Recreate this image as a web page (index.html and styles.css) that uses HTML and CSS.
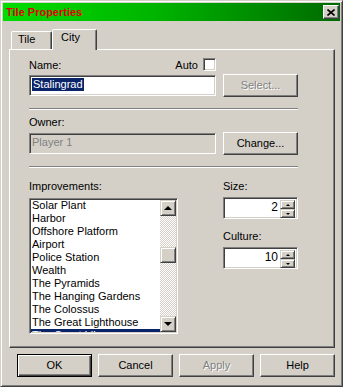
FILE: index.html
```html
<!DOCTYPE html>
<html>
<head>
<meta charset="utf-8">
<link rel="stylesheet" href="styles.css">
</head>
<body>
<div class="window">
  <div class="titlebar">
    <span class="title">Tile Properties</span>
    <div class="close">
      <svg width="8" height="7" viewBox="0 0 8 7"><path d="M0.5 0.5 L7.5 6.5 M7.5 0.5 L0.5 6.5" stroke="#000" stroke-width="1.6" fill="none"/></svg>
    </div>
  </div>
  <div class="tabs">
    <div class="tab">Tile</div>
    <div class="tab active">City</div>
  </div>
  <div class="sheet">
    <div class="head-row">
      <span class="label">Name:</span>
      <span class="auto"><span class="label">Auto</span><span class="check"></span></span>
    </div>
    <div class="field-row">
      <div class="edit"><span class="sel">Stalingrad</span></div>
      <div class="btn disabled">Select...</div>
    </div>
    <div class="sep"></div>
    <div class="label owner-label">Owner:</div>
    <div class="field-row owner-row">
      <div class="edit readonly">Player 1</div>
      <div class="btn">Change...</div>
    </div>
    <div class="sep"></div>
    <div class="lower">
      <div class="impr">
        <div class="label">Improvements:</div>
        <div class="listbox">
          <ul class="items">
            <li>Solar Plant</li>
            <li>Harbor</li>
            <li>Offshore Platform</li>
            <li>Airport</li>
            <li>Police Station</li>
            <li>Wealth</li>
            <li>The Pyramids</li>
            <li>The Hanging Gardens</li>
            <li>The Colossus</li>
            <li>The Great Lighthouse</li>
            <li class="selected">The Great Library</li>
          </ul>
          <div class="scrollbar">
            <div class="sb-btn"><span class="tri-up"></span></div>
            <div class="track"><div class="thumb"></div></div>
            <div class="sb-btn"><span class="tri-down"></span></div>
          </div>
        </div>
      </div>
      <div class="spins">
        <div class="label">Size:</div>
        <div class="spin">
          <span class="val">2</span>
          <div class="spin-btns">
            <div class="sp"><span class="mini-up"></span></div>
            <div class="sp"><span class="mini-down"></span></div>
          </div>
        </div>
        <div class="label culture-label">Culture:</div>
        <div class="spin">
          <span class="val">10</span>
          <div class="spin-btns">
            <div class="sp"><span class="mini-up"></span></div>
            <div class="sp"><span class="mini-down"></span></div>
          </div>
        </div>
      </div>
    </div>
  </div>
  <div class="buttons">
    <div class="btn default">OK</div>
    <div class="btn">Cancel</div>
    <div class="btn disabled">Apply</div>
    <div class="btn">Help</div>
  </div>
</div>
</body>
</html>
```
FILE: styles.css
```css
html, body {
  margin: 0;
  padding: 0;
  background: #d4d0c8;
}
body {
  font-family: "Liberation Sans", Arial, sans-serif;
  font-size: 11px;
  color: #000;
}
.window {
  width: 343px;
  height: 387px;
  box-sizing: border-box;
  border: 1px solid;
  border-color: #d4d0c8 #404040 #404040 #d4d0c8;
  box-shadow: inset 1px 1px #fff, inset -1px -1px #808080;
  padding: 2px;
  background: #d4d0c8;
  display: flex;
  flex-direction: column;
}
.titlebar {
  height: 18px;
  flex: none;
  display: flex;
  align-items: center;
  justify-content: space-between;
  background: linear-gradient(to right, #00dc00, #00b400 45%, #006a00);
  padding-left: 3px;
}
.title {
  color: #e00000;
  font-weight: bold;
  font-size: 11px;
  line-height: 13px;
}
.close {
  width: 16px;
  height: 14px;
  box-sizing: border-box;
  margin-right: 1px;
  background: #d4d0c8;
  border: 1px solid;
  border-color: #fff #404040 #404040 #fff;
  box-shadow: inset -1px -1px #808080;
  display: flex;
  align-items: center;
  justify-content: center;
}
.close svg { display: block; }
.tabs {
  display: flex;
  align-items: flex-end;
  height: 20px;
  margin-top: 8px;
  margin-left: 6px;
  flex: none;
  position: relative;
  z-index: 1;
}
.tab {
  box-sizing: border-box;
  height: 18px;
  width: 41px;
  margin-left: 2px;
  border: 1px solid;
  border-bottom: none;
  border-color: #fff #404040 transparent #fff;
  box-shadow: inset -1px 0 #808080;
  border-radius: 2px 2px 0 0;
  padding: 1px 0 0 6px;
  line-height: 13px;
}
.tab.active {
  height: 21px;
  width: 45px;
  margin-left: 0;
  margin-bottom: -1px;
  background: #d4d0c8;
  padding: 1px 0 0 8px;
}
.sheet {
  box-sizing: border-box;
  width: 326px;
  height: 299px;
  margin-left: 6px;
  border: 1px solid;
  border-color: #fff #404040 #404040 #fff;
  box-shadow: inset -1px -1px #808080;
  padding: 8px 0 0 19px;
  flex: none;
}
.label {
  line-height: 13px;
  display: block;
}
.head-row {
  width: 187px;
  height: 16px;
  display: flex;
  justify-content: space-between;
  align-items: flex-start;
}
.head-row > .label { margin-top: 1px; }
.auto {
  display: flex;
  align-items: flex-start;
}
.auto .label { margin-top: 1px; }
.check {
  width: 13px;
  height: 13px;
  box-sizing: border-box;
  margin-left: 5px;
  background: #fff;
  border: 1px solid;
  border-color: #808080 #fff #fff #808080;
  box-shadow: inset 1px 1px #404040, inset -1px -1px #d4d0c8;
}
.field-row {
  display: flex;
  align-items: center;
  gap: 7px;
  height: 23px;
}
.owner-row { margin-top: 3px; }
.edit {
  width: 187px;
  height: 21px;
  box-sizing: border-box;
  background: #fff;
  border: 1px solid;
  border-color: #808080 #fff #fff #808080;
  box-shadow: inset 1px 1px #404040, inset -1px -1px #d4d0c8;
  padding: 2px 2px;
  line-height: 13px;
}
.edit.readonly {
  background: #d4d0c8;
  color: #808080;
  padding-left: 2px;
}
.sel {
  display: inline-block;
  background: #0a246a;
  color: #fff;
  padding: 0 1px;
  line-height: 13px;
}
.btn {
  width: 75px;
  height: 23px;
  box-sizing: border-box;
  border: 1px solid;
  border-color: #fff #404040 #404040 #fff;
  box-shadow: inset -1px -1px #808080;
  background: #d4d0c8;
  display: flex;
  align-items: center;
  justify-content: center;
  line-height: 13px;
  flex: none;
}
.btn.disabled {
  color: #808080;
  text-shadow: 1px 1px #fff;
}
.btn.default {
  border-color: #000;
  box-shadow: inset 1px 1px #fff, inset -1px -1px #404040, inset -2px -2px #808080;
}
.sep {
  width: 269px;
  height: 0;
  border-top: 1px solid #808080;
  border-bottom: 1px solid #fff;
  margin-top: 11px;
}
.owner-label { margin-top: 6px; }
.lower {
  display: flex;
  gap: 45px;
  margin-top: 12px;
}
.impr .label { margin-bottom: 5px; }
.listbox {
  width: 149px;
  height: 136px;
  box-sizing: border-box;
  border: 1px solid;
  border-color: #808080 #fff #fff #808080;
  box-shadow: inset 1px 1px #404040, inset -1px -1px #d4d0c8;
  padding: 1px;
  background: #fff;
  display: flex;
}
.items {
  list-style: none;
  margin: 0;
  padding: 0;
  flex: 1;
  overflow: hidden;
}
.items li {
  line-height: 13px;
  height: 13px;
  padding-left: 1px;
  white-space: nowrap;
}
.items li:first-child { margin-top: -1px; }
.items li.selected {
  background: #0a246a;
  color: #fff;
}
.scrollbar {
  width: 16px;
  display: flex;
  flex-direction: column;
  flex: none;
}
.sb-btn {
  width: 16px;
  height: 16px;
  box-sizing: border-box;
  background: #d4d0c8;
  border: 1px solid;
  border-color: #d4d0c8 #404040 #404040 #d4d0c8;
  box-shadow: inset 1px 1px #fff, inset -1px -1px #808080;
  display: flex;
  align-items: center;
  justify-content: center;
  flex: none;
}
.tri-up {
  width: 0;
  height: 0;
  border-left: 4px solid transparent;
  border-right: 4px solid transparent;
  border-bottom: 4px solid #000;
}
.tri-down {
  width: 0;
  height: 0;
  border-left: 4px solid transparent;
  border-right: 4px solid transparent;
  border-top: 4px solid #000;
}
.track {
  flex: 1;
  background: repeating-conic-gradient(#d4d0c8 0 25%, #fff 0 50%) 0 0 / 2px 2px;
}
.thumb {
  height: 16px;
  margin-top: 31px;
  box-sizing: border-box;
  background: #d4d0c8;
  border: 1px solid;
  border-color: #d4d0c8 #404040 #404040 #d4d0c8;
  box-shadow: inset 1px 1px #fff, inset -1px -1px #808080;
}
.spins {
  width: 75px;
  display: flex;
  flex-direction: column;
}
.spin {
  width: 75px;
  height: 22px;
  margin-top: 4px;
  box-sizing: border-box;
  background: #fff;
  border: 1px solid;
  border-color: #808080 #fff #fff #808080;
  box-shadow: inset 1px 1px #404040, inset -1px -1px #d4d0c8;
  padding: 2px;
  display: flex;
  align-items: flex-start;
}
.val {
  flex: 1;
  text-align: right;
  line-height: 14px;
  font-size: 12px;
  padding-right: 2px;
}
.spin-btns {
  width: 15px;
  height: 18px;
  display: flex;
  flex-direction: column;
}
.sp {
  flex: 1;
  box-sizing: border-box;
  background: #d4d0c8;
  border: 1px solid;
  border-color: #d4d0c8 #404040 #404040 #d4d0c8;
  box-shadow: inset 1px 1px #fff, inset -1px -1px #808080;
  display: flex;
  align-items: center;
  justify-content: center;
}
.mini-up {
  width: 0;
  height: 0;
  border-left: 2px solid transparent;
  border-right: 2px solid transparent;
  border-bottom: 2px solid #000;
}
.mini-down {
  width: 0;
  height: 0;
  border-left: 2px solid transparent;
  border-right: 2px solid transparent;
  border-top: 2px solid #000;
}
.culture-label { margin-top: 11px; }
.buttons {
  display: flex;
  gap: 6px;
  margin-top: 6px;
  margin-left: 14px;
}
```
